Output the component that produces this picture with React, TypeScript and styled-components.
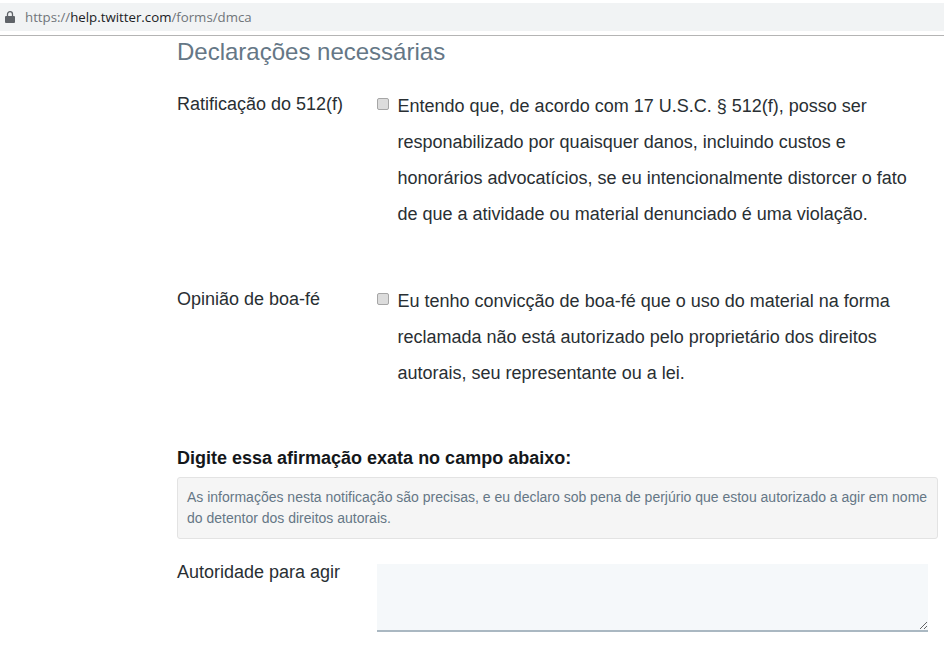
import React from "react";
import styled, { createGlobalStyle } from "styled-components";

const GlobalStyle = createGlobalStyle`
  html, body {
    margin: 0;
    padding: 0;
    background: #fff;
    overflow: hidden;
  }
  body {
    font-family: "Liberation Sans", Arial, sans-serif;
    color: #292f33;
  }
`;

const Page = styled.div`
  width: 944px;
  height: 656px;
  overflow: hidden;
`;

const BrowserBar = styled.div`
  height: 32px;
  padding-top: 3px;
  background: #fff;
  border-bottom: 1px solid #b4b4b4;
  box-sizing: content-box;
`;

const AddressBar = styled.div`
  height: 28px;
  background: #f1f3f4;
  display: flex;
  align-items: center;
  gap: 10px;
  padding-left: 5px;
  font-family: "Open Sans", sans-serif;
  font-size: 13.25px;
  color: #70757a;
`;

const Host = styled.span`
  color: #202124;
`;

const Content = styled.main`
  padding: 0 16px 0 177px;
  display: flex;
  flex-direction: column;
`;

const Heading = styled.h2`
  margin: 2px 0 0;
  font-size: 24px;
  line-height: 28px;
  font-weight: 400;
  color: #657786;
`;

const Row = styled.div<{ $mt: number }>`
  display: flex;
  margin-top: ${(p) => p.$mt}px;
`;

const Label = styled.label<{ $shift: number }>`
  flex: 0 0 200px;
  margin-top: ${(p) => p.$shift}px;
  font-size: 18px;
  line-height: 24px;
`;

const CheckBox = styled.span`
  flex: 0 0 10px;
  width: 10px;
  height: 10px;
  margin: 4px 8.5px 0 0;
  background: #dcdcdc;
  border: 1px solid #a6a6a6;
  border-radius: 2px;
`;

const Statement = styled.p`
  margin: -6px 0 0;
  width: 530px;
  font-size: 18px;
  line-height: 36px;
`;

const PromptTitle = styled.h3`
  margin: 55px 0 0;
  font-size: 18px;
  line-height: 24px;
  font-weight: 700;
  color: #14171a;
`;

const Quote = styled.div`
  box-sizing: border-box;
  width: 761px;
  height: 62px;
  margin-top: 7px;
  padding: 9px 9px;
  background: #f5f5f5;
  border: 1px solid #e3e3e3;
  border-radius: 3px;
  font-size: 14px;
  line-height: 21px;
  color: #657786;
`;

const AuthorityRow = styled.div`
  display: flex;
  margin-top: 25px;
`;

const TextArea = styled.textarea`
  box-sizing: border-box;
  display: block;
  width: 551px;
  height: 68px;
  margin: 0;
  padding: 0;
  background: #f5f8fa;
  border: 0;
  border-bottom: 2px solid #aab8c2;
  border-radius: 0;
  outline: none;
`;

const LockIcon = () => (
  <svg width="10" height="12" viewBox="0 0 10 12" fill="#5f6368">
    <path d="M1 5h8a1 1 0 0 1 1 1v5a1 1 0 0 1-1 1H1a1 1 0 0 1-1-1V6a1 1 0 0 1 1-1z" />
    <path d="M2.5 5V3.2a2.5 2.5 0 0 1 5 0V5" fill="none" stroke="#5f6368" strokeWidth="1.3" />
  </svg>
);

export default function App() {
  return (
    <Page>
      <GlobalStyle />
      <BrowserBar>
        <AddressBar>
          <LockIcon />
          <span>
            https://<Host>help.twitter.com</Host>/forms/dmca
          </span>
        </AddressBar>
      </BrowserBar>
      <Content>
        <Heading>Declarações necessárias</Heading>
        <Row $mt={28}>
          <Label $shift={-2}>Ratificação do 512(f)</Label>
          <CheckBox />
          <Statement>
            Entendo que, de acordo com 17 U.S.C. § 512(f), posso ser
            responabilizado por quaisquer danos, incluindo custos e honorários
            advocatícios, se eu intencionalmente distorcer o fato de que a
            atividade ou material denunciado é uma violação.
          </Statement>
        </Row>
        <Row $mt={57}>
          <Label $shift={-2}>Opinião de boa-fé</Label>
          <CheckBox />
          <Statement>
            Eu tenho convicção de boa-fé que o uso do material na forma
            reclamada não está autorizado pelo proprietário dos direitos
            autorais, seu representante ou a lei.
          </Statement>
        </Row>
        <PromptTitle>Digite essa afirmação exata no campo abaixo:</PromptTitle>
        <Quote>
          As informações nesta notificação são precisas, e eu declaro sob pena
          de perjúrio que estou autorizado a agir em nome do detentor dos
          direitos autorais.
        </Quote>
        <AuthorityRow>
          <Label $shift={-4}>Autoridade para agir</Label>
          <TextArea />
        </AuthorityRow>
      </Content>
    </Page>
  );
}
